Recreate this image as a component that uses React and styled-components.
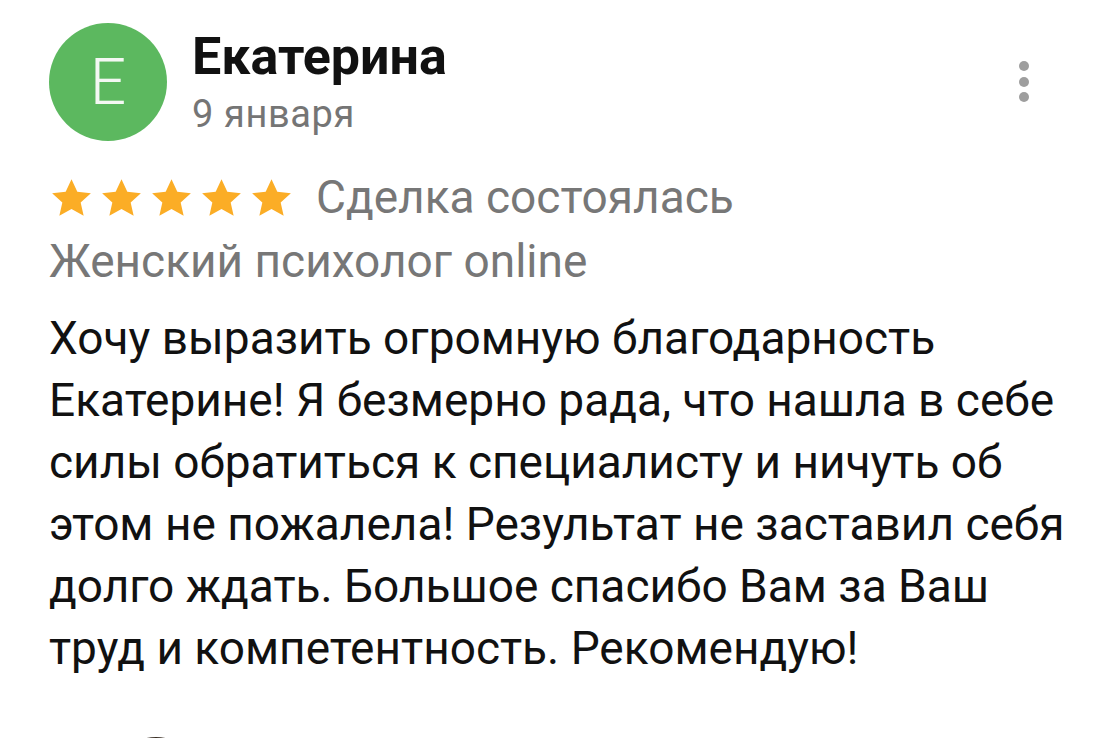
import styled, { createGlobalStyle } from "styled-components";

const GlobalStyle = createGlobalStyle`
  html, body {
    margin: 0;
    padding: 0;
    background: #ffffff;
  }
  body {
    font-family: Roboto, "Liberation Sans", sans-serif;
    -webkit-font-smoothing: antialiased;
  }
`;

const Star = ({ color }) => (
  <svg width="39" height="37" viewBox="1 0.6 22 21">
    <path
      d="M12 0.8l3.3 7.1 7.7 0.8-5.8 5.2 1.7 7.6L12 17.6l-6.9 3.9 1.7-7.6L1 8.7l7.7-0.8z"
      fill={color}
    />
  </svg>
);

const App = () => {
  const rating = 5;

  return (
    <>
      <GlobalStyle />
      <Review>
        <Header>
          <Avatar color="#5cb85f">E</Avatar>
          <Author>
            <Name>Екатерина</Name>
            <Date>9 января</Date>
          </Author>
          <MenuBtn aria-label="menu">
            <Dot />
            <Dot />
            <Dot />
          </MenuBtn>
        </Header>
        <RatingRow>
          <Stars>
            {[1, 2, 3, 4, 5].map((i) => (
              <Star key={i} color={i <= rating ? "#fbad26" : "#e0e0e0"} />
            ))}
          </Stars>
          <Meta>Сделка состоялась</Meta>
        </RatingRow>
        <Category>Женский психолог online</Category>
        <Text>
          Хочу выразить огромную благодарность
          <br />
          Екатерине! Я безмерно рада, что нашла в себе
          <br />
          силы обратиться к специалисту и ничуть об
          <br />
          этом не пожалела! Результат не заставил себя
          <br />
          долго ждать. Большое спасибо Вам за Ваш
          <br />
          труд и компетентность. Рекомендую!
        </Text>
        <NextAvatar />
      </Review>
    </>
  );
};

const Review = styled.div`
  width: 1117px;
  height: 738px;
  overflow: hidden;
  box-sizing: border-box;
  padding: 23px 0 0 49px;
  display: flex;
  flex-direction: column;
`;

const Header = styled.div`
  display: flex;
  align-items: flex-start;
  gap: 25px;
  width: 1000px;
`;

const Avatar = styled.div`
  width: 118px;
  height: 118px;
  border-radius: 50%;
  background: ${(props) => props.color};
  color: #f4f8f3;
  font-family: Roboto, sans-serif;
  font-weight: 300;
  font-size: 64px;
  display: flex;
  align-items: center;
  justify-content: center;
  flex-shrink: 0;
`;

const Author = styled.div`
  display: flex;
  flex-direction: column;
  flex: 1;
  padding-top: 5px;
`;

const Name = styled.div`
  font-weight: 700;
  font-size: 52px;
  line-height: 58px;
  color: #111111;
`;

const Date = styled.div`
  margin-top: 4px;
  font-size: 38px;
  line-height: 48px;
  letter-spacing: 0.6px;
  color: #757575;
`;

const MenuBtn = styled.div`
  display: flex;
  flex-direction: column;
  gap: 5.5px;
  margin-top: 38px;
  margin-right: 20px;
`;

const Dot = styled.span`
  width: 10px;
  height: 10px;
  border-radius: 50%;
  background: #9e9e9e;
`;

const RatingRow = styled.div`
  display: flex;
  align-items: center;
  gap: 25px;
  margin-top: 26px;
`;

const Stars = styled.div`
  display: flex;
  gap: 11px;
  padding-left: 3px;
`;

const Meta = styled.div`
  font-size: 46px;
  line-height: 60px;
  color: #777777;
`;

const Category = styled(Meta)`
  margin-top: 4px;
`;

const Text = styled.p`
  margin: 16px 0 0;
  font-size: 46px;
  line-height: 62px;
  color: #111111;
  white-space: nowrap;
`;

const NextAvatar = styled.div`
  width: 90px;
  height: 90px;
  border-radius: 50%;
  background: #3b3026;
  margin: 58px 0 0 62px;
  flex-shrink: 0;
`;

export default App;
